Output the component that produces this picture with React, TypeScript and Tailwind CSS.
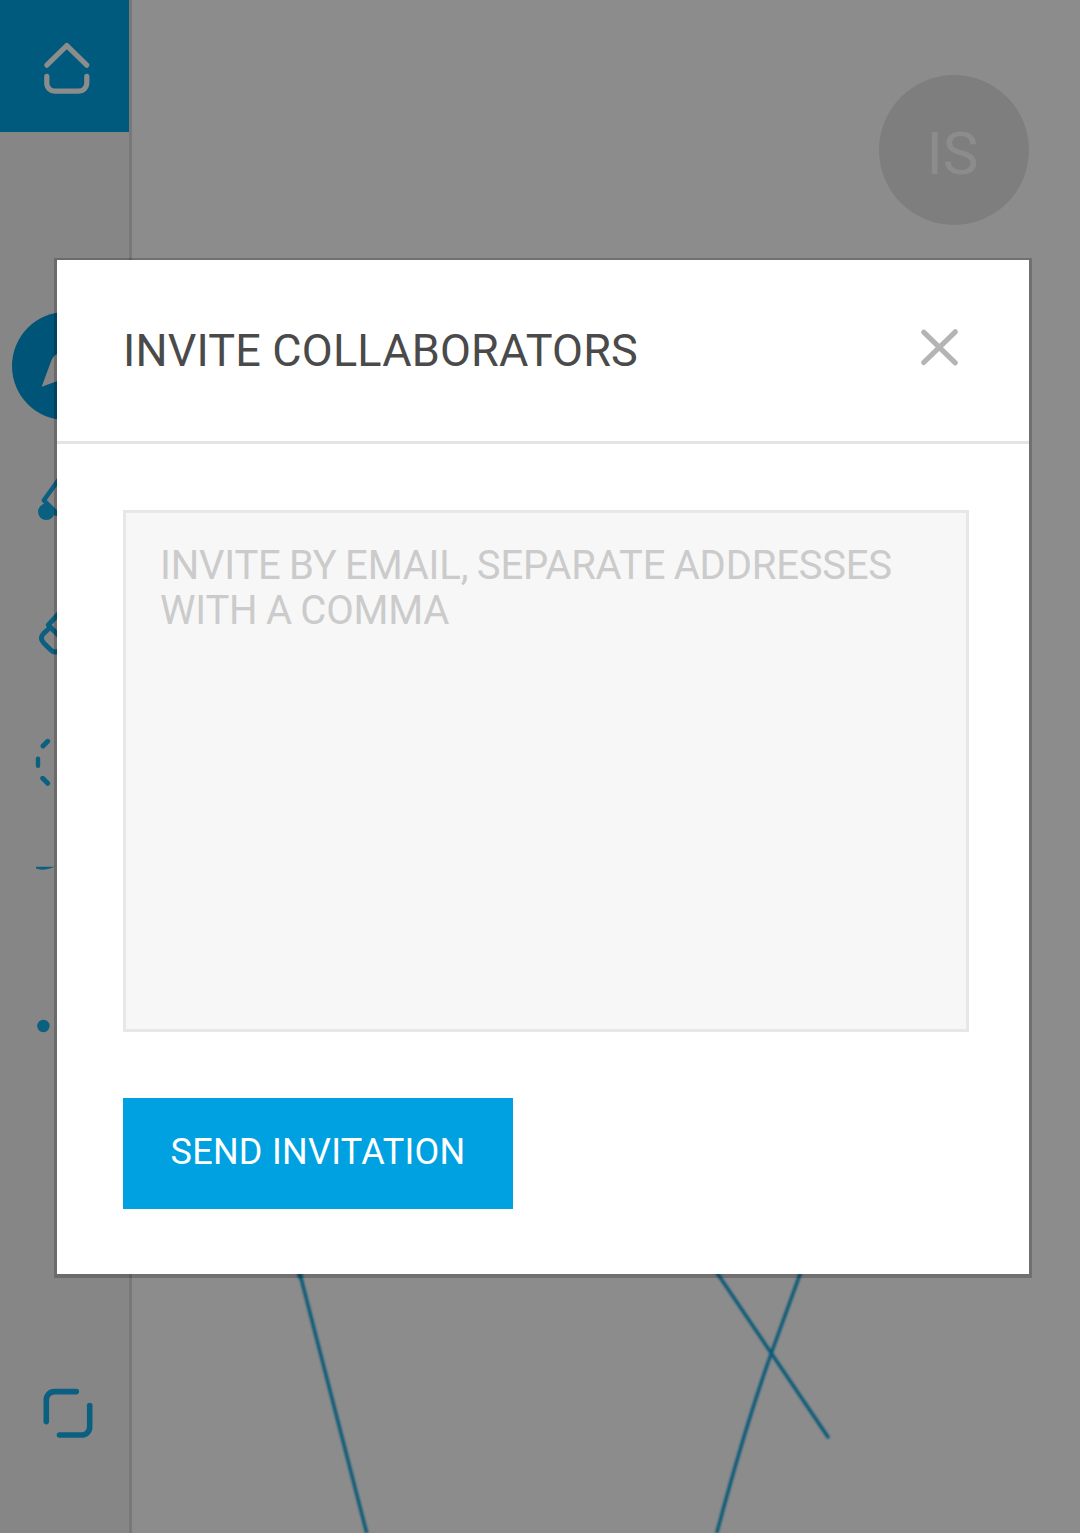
import type { ReactNode } from "react";

function Tool({ children }: { children?: ReactNode }) {
  return (
    <button className="block h-[132px] w-full text-[#14ade9]">
      <svg
        viewBox="0 0 129 132"
        className="block h-[132px] w-[129px]"
        fill="none"
        stroke="currentColor"
        strokeLinecap="round"
        strokeLinejoin="round"
      >
        {children}
      </svg>
    </button>
  );
}

function Sidebar() {
  return (
    <aside className="flex w-[132px] shrink-0 flex-col border-r-[3px] border-[#dadada] bg-[#f4f4f4]">
      <button className="h-[132px] w-full bg-[#00a4e3] text-white">
        <svg
          viewBox="0 0 129 132"
          className="block h-[132px] w-[129px]"
          fill="none"
          stroke="currentColor"
          strokeWidth="5.2"
          strokeLinecap="round"
          strokeLinejoin="round"
        >
          <path d="M46.8 65.2 66.8 45.6 86.8 65.2" />
          <path d="M46.8 76.4v6.8a8 8 0 0 0 8 8h24a8 8 0 0 0 8-8v-6.8" />
        </svg>
      </button>
      <nav className="mt-[168px] flex flex-col">
        <Tool>
          <circle cx="66" cy="66" r="54" fill="#009ada" stroke="none" />
          <path d="M41.7 86.8 50.8 62Q53 55.5 57.5 53.8L74 56V75Z" fill="#f4f4f4" stroke="none" />
        </Tool>
        <Tool>
          <circle cx="46.3" cy="79.8" r="8.3" fill="currentColor" stroke="none" />
          <path d="M62 43 43.8 68.4 62 86" strokeWidth="4.4" />
          <path d="M44 68 60 84 50 82Z" fill="currentColor" strokeWidth="1" />
        </Tool>
        <Tool>
          <path d="M49.5 64 43.5 69.6Q39.3 74 43.5 78.7L50.5 85.8Q55 90.5 62 85" strokeWidth="4.9" />
          <path d="M62 46 48.3 61 62 75" strokeWidth="4.9" />
        </Tool>
        <Tool>
          <path d="M43 50 47.7 45.3M42.7 82.3l5 5" strokeWidth="4.9" />
          <path d="M38 62.7v7" strokeWidth="4.4" />
        </Tool>
        <Tool>
          <path d="M36 38.8H55Q43 43.5 36 40.6Z" fill="currentColor" stroke="none" />
        </Tool>
        <Tool>
          <circle cx="43.4" cy="66" r="6.2" fill="currentColor" stroke="none" />
        </Tool>
      </nav>
      <div className="mt-[255px]">
        <Tool>
          <path
            d="M76.3 44.6H54.3a8 8 0 0 0-8 8v22M89.7 58.5v21.5a8 8 0 0 1-8 8H59.5"
            strokeWidth="5.6"
          />
        </Tool>
      </div>
    </aside>
  );
}

function Canvas() {
  return (
    <main className="flex min-w-0 flex-1 flex-col justify-between bg-white">
      <header className="flex justify-end pt-[75px] pr-[51px]">
        <div className="flex size-[150px] items-center justify-center rounded-full bg-[#e5e5e5] pt-[8px] pr-[3px] text-[60px] text-white">
          IS
        </div>
      </header>
      <svg
        viewBox="132 1233 948 300"
        className="block h-[300px] w-full blur-[1px]"
        fill="none"
        stroke="#12a4da"
        strokeWidth="3.4"
        strokeLinecap="round"
      >
        <path d="M297 1266 300.5 1276Q316 1336 368 1538" />
        <path d="M297 1266 300.5 1277" strokeWidth="5" />
        <path d="M709 1261 828 1437" />
        <path d="M803 1266 771 1354Q744 1430 716 1536" />
      </svg>
    </main>
  );
}

function InviteDialog() {
  return (
    <section
      role="dialog"
      aria-label="Invite collaborators"
      className="flex h-[1020px] w-[978px] flex-col border-x-[3px] border-t-[2px] border-b-[4px] border-black/20 bg-white bg-clip-padding"
    >
      <header className="flex h-[184px] shrink-0 items-center justify-between border-b-[3px] border-[#e4e4e4] pr-[69px] pl-[66px]">
        <h1 className="text-[45px] leading-[54px] tracking-[0.17px] text-[#4a4a4a]">
          INVITE COLLABORATORS
        </h1>
        <button aria-label="Close" className="mb-[7px]">
          <svg
            viewBox="0 0 42 42"
            className="block size-[42px]"
            stroke="#b4b4b4"
            strokeWidth="5.2"
            strokeLinecap="round"
          >
            <path d="M5.7 6.2 37.3 36.8M37.3 5.8 5.7 36.5" />
          </svg>
        </button>
      </header>
      <div className="flex flex-1 flex-col items-start pt-[66px] pl-[66px]">
        <textarea
          className="block h-[522px] w-[846px] resize-none border-[3px] border-[#e7e7e7] bg-[#f7f7f7] px-[34px] py-[30px] text-[40px] leading-[45px] tracking-[-0.2px] [word-spacing:-1.2px] outline-none placeholder:text-[#cbcbcb] placeholder:opacity-100"
          placeholder="INVITE BY EMAIL, SEPARATE ADDRESSES WITH A COMMA"
        />
        <button className="mt-[66px] flex h-[111px] w-[390px] items-center justify-center bg-[#00a1e1] pb-[4px] text-[36px] tracking-[0.28px] text-white">
          SEND INVITATION
        </button>
      </div>
    </section>
  );
}

export default function App() {
  return (
    <div className="relative flex h-[1533px] w-[1080px] overflow-hidden font-['Roboto',sans-serif]">
      <Sidebar />
      <Canvas />
      <div className="absolute inset-0 bg-black/45 pt-[258px] pl-[54px]">
        <InviteDialog />
      </div>
    </div>
  );
}
